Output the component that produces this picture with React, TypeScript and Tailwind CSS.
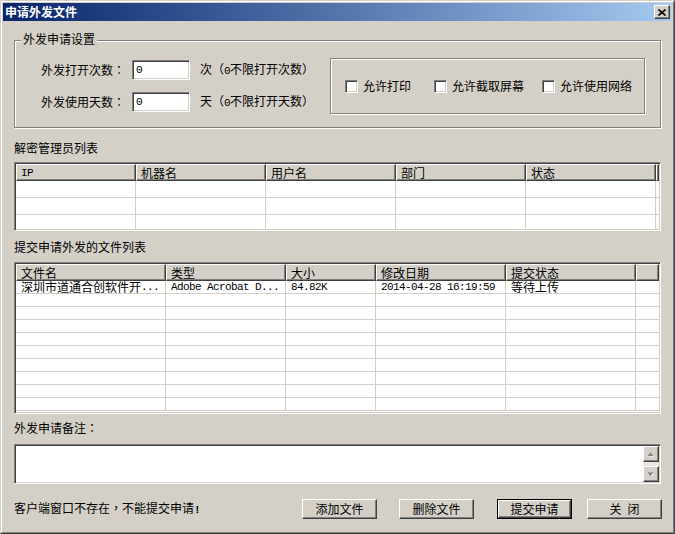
import React from 'react'

const raised =
  'border border-t-white border-l-white border-r-[#404040] border-b-[#404040] shadow-[inset_-1px_-1px_0_#808080]'
const sunken =
  'border border-t-[#808080] border-l-[#808080] border-r-white border-b-white shadow-[inset_1px_1px_0_#404040,inset_-1px_-1px_0_#d4d0c8]'
const etched = 'border border-[#808080] shadow-[inset_1px_1px_0_#fff,1px_1px_0_#fff]'
const mono = "font-['Liberation_Mono',monospace] text-[11px] tracking-[-0.6px]"
// centred full-width punctuation, as the old bitmap font draws it
const punct = "font-['Noto_Sans_CJK_TC',sans-serif]"

type Col = { title: React.ReactNode; w: string }

const adminCols: Col[] = [
  { title: <span className={mono}>IP</span>, w: 'w-[120px]' },
  { title: '机器名', w: 'w-[130px]' },
  { title: '用户名', w: 'w-[130px]' },
  { title: '部门', w: 'w-[130px]' },
  { title: '状态', w: 'w-[130px]' },
]

const fileCols: Col[] = [
  { title: '文件名', w: 'w-[150px]' },
  { title: '类型', w: 'w-[120px]' },
  { title: '大小', w: 'w-[90px]' },
  { title: '修改日期', w: 'w-[130px]' },
  { title: '提交状态', w: 'w-[130px]' },
]

const files: React.ReactNode[][] = [
  [
    <>深圳市道通合创软件开<span className={mono}>...</span></>,
    <span className={mono}>Adobe Acrobat D...</span>,
    <span className={mono}>84.82K</span>,
    <span className={mono}>2014-04-28 16:19:59</span>,
    '等待上传',
  ],
]

function ListView({
  cols,
  rows,
  count,
  rowH,
  height,
}: {
  cols: Col[]
  rows: React.ReactNode[][]
  count: number
  rowH: string
  height: string
}) {
  return (
    <div className={`${sunken} bg-white p-[1px] overflow-hidden ${height}`}>
      <div className="flex h-[17px]">
        {cols.map((c, i) => (
          <div key={i} className={`${raised} ${c.w} shrink-0 bg-[#d4d0c8] pl-[4px] flex items-center whitespace-nowrap`}>
            {c.title}
          </div>
        ))}
        <div className={`${raised} flex-1 bg-[#d4d0c8]`} />
      </div>
      {Array.from({ length: count }).map((_, r) => (
        <div key={r} className={`flex ${rowH}`}>
          {cols.map((c, i) => (
            <div
              key={i}
              className={`${c.w} shrink-0 border-r border-b border-[#d4d0c8] pl-[5px] flex items-center whitespace-nowrap`}
            >
              {rows[r]?.[i]}
            </div>
          ))}
          <div className="flex-1 border-b border-[#d4d0c8]" />
        </div>
      ))}
    </div>
  )
}

function Check({ label, w }: { label: string; w: string }) {
  return (
    <div className={`flex items-center ${w}`}>
      <div className={`${sunken} w-[13px] h-[13px] bg-white`} />
      <span className="ml-[5px]">{label}</span>
    </div>
  )
}

function Btn({ children, def }: { children: React.ReactNode; def?: boolean }) {
  if (def) {
    return (
      <div className="w-[75px] h-[20px] border border-black">
        <div className={`${raised} h-full flex items-center justify-center`}>{children}</div>
      </div>
    )
  }
  return <div className={`${raised} w-[75px] h-[20px] flex items-center justify-center`}>{children}</div>
}

function Arrow({ up }: { up?: boolean }) {
  return (
    <div className={`${raised} h-[16px] bg-[#d4d0c8] flex items-center justify-center`}>
      <svg width="8" height="5" viewBox="0 0 8 5">
        {up ? (
          <>
            <path d="M1.5 4.5 L4.5 1.5 L7.5 4.5 Z" fill="#fff" />
            <path d="M0.5 4 L3.5 0.5 L6.5 4 Z" fill="#808080" />
          </>
        ) : (
          <>
            <path d="M1.5 1.5 L7.5 1.5 L4.5 4.5 Z" fill="#fff" />
            <path d="M0.5 0.5 L6.5 0.5 L3.5 4 Z" fill="#808080" />
          </>
        )}
      </svg>
    </div>
  )
}

export default function App() {
  return (
    <div className="w-[675px] h-[534px] bg-[#d4d0c8] font-['Noto_Sans_CJK_SC',sans-serif] text-[12px] leading-[12px] text-black overflow-hidden">
      <div className="h-full border border-t-[#d4d0c8] border-l-[#d4d0c8] border-r-[#404040] border-b-[#404040]">
        <div className="h-full border border-t-white border-l-white border-r-[#808080] border-b-[#808080] pt-[1px] pl-[1px] pr-[2px] pb-[2px] flex flex-col">
          {/* Title bar */}
          <div className="h-[18px] shrink-0 flex items-center bg-linear-to-r from-[#0a246a] to-[#a6caf0] pl-[2px] pr-[1px]">
            <span className="text-white font-bold">申请外发文件</span>
            <div className={`${raised} ml-auto w-[16px] h-[14px] bg-[#d4d0c8] flex items-center justify-center`}>
              <svg width="8" height="7" viewBox="0 0 8 7">
                <path d="M0.5 0.5L7.5 6.5M7.5 0.5L0.5 6.5" stroke="#000" strokeWidth="1.6" />
              </svg>
            </div>
          </div>

          {/* Body */}
          <div className="flex-1 pl-[11px] pr-[10px] flex flex-col">
            {/* 外发申请设置 */}
            <div className={`${etched} relative mt-[19px] h-[88px] flex items-start pt-[17px] pr-[15px]`}>
              <span className="absolute top-[-8px] left-[6px] px-[2px] bg-[#d4d0c8]">外发申请设置</span>
              <div className="pl-[26px] mt-[2px] flex flex-col gap-[12px]">
                <div className="flex items-center h-[20px]">
                  <span className="w-[91px]">
                    外发打开次数<span className={punct}>：</span>
                  </span>
                  <div className={`${sunken} w-[58px] h-[20px] bg-white pl-[3px] flex items-center`}>
                    <span className={mono}>0</span>
                  </div>
                  <span className="ml-[10px]">
                    次<span className={punct}>（</span>
                    <span className={mono}>0</span>不限打开次数<span className={punct}>）</span>
                  </span>
                </div>
                <div className="flex items-center h-[20px]">
                  <span className="w-[91px]">
                    外发使用天数<span className={punct}>：</span>
                  </span>
                  <div className={`${sunken} w-[58px] h-[20px] bg-white pl-[3px] flex items-center`}>
                    <span className={mono}>0</span>
                  </div>
                  <span className="ml-[10px]">
                    天<span className={punct}>（</span>
                    <span className={mono}>0</span>不限打开天数<span className={punct}>）</span>
                  </span>
                </div>
              </div>
              <div className={`${etched} ml-auto w-[315px] h-[56px] flex items-center pl-[14px]`}>
                <Check label="允许打印" w="w-[89px]" />
                <Check label="允许截取屏幕" w="w-[108px]" />
                <Check label="允许使用网络" w="" />
              </div>
            </div>

            <div className="mt-[14px]">解密管理员列表</div>
            <div className="mt-[8px]">
              <ListView cols={adminCols} rows={[]} count={3} rowH="h-[17px]" height="h-[69px]" />
            </div>

            <div className="mt-[10px]">提交申请外发的文件列表</div>
            <div className="mt-[9px]">
              <ListView cols={fileCols} rows={files} count={10} rowH="h-[13px]" height="h-[152px]" />
            </div>

            <div className="mt-[8px]">
              外发申请备注<span className={punct}>：</span>
            </div>
            <div className={`${sunken} mt-[10px] h-[40px] bg-white p-[1px] flex justify-end`}>
              <div className="w-[16px] flex flex-col">
                <Arrow up />
                <div className="flex-1 bg-[repeating-conic-gradient(#d4d0c8_0%_25%,#ffffff_0%_50%)] bg-[length:2px_2px]" />
                <Arrow />
              </div>
            </div>

            <div className="mt-[15px] h-[20px] flex items-center -mr-[1px]">
              <span>
                客户端窗口不存在<span className={punct}>，</span>不能提交申请
                <span className={`${mono} font-bold`}>!</span>
              </span>
              <div className="ml-auto flex items-center">
                <Btn>添加文件</Btn>
                <div className="ml-[22px]">
                  <Btn>删除文件</Btn>
                </div>
                <div className="ml-[23px]">
                  <Btn def>提交申请</Btn>
                </div>
                <div className="ml-[15px]">
                  <Btn>
                    关<span className="inline-block w-[6px]" />闭
                  </Btn>
                </div>
              </div>
            </div>
          </div>
        </div>
      </div>
    </div>
  )
}
